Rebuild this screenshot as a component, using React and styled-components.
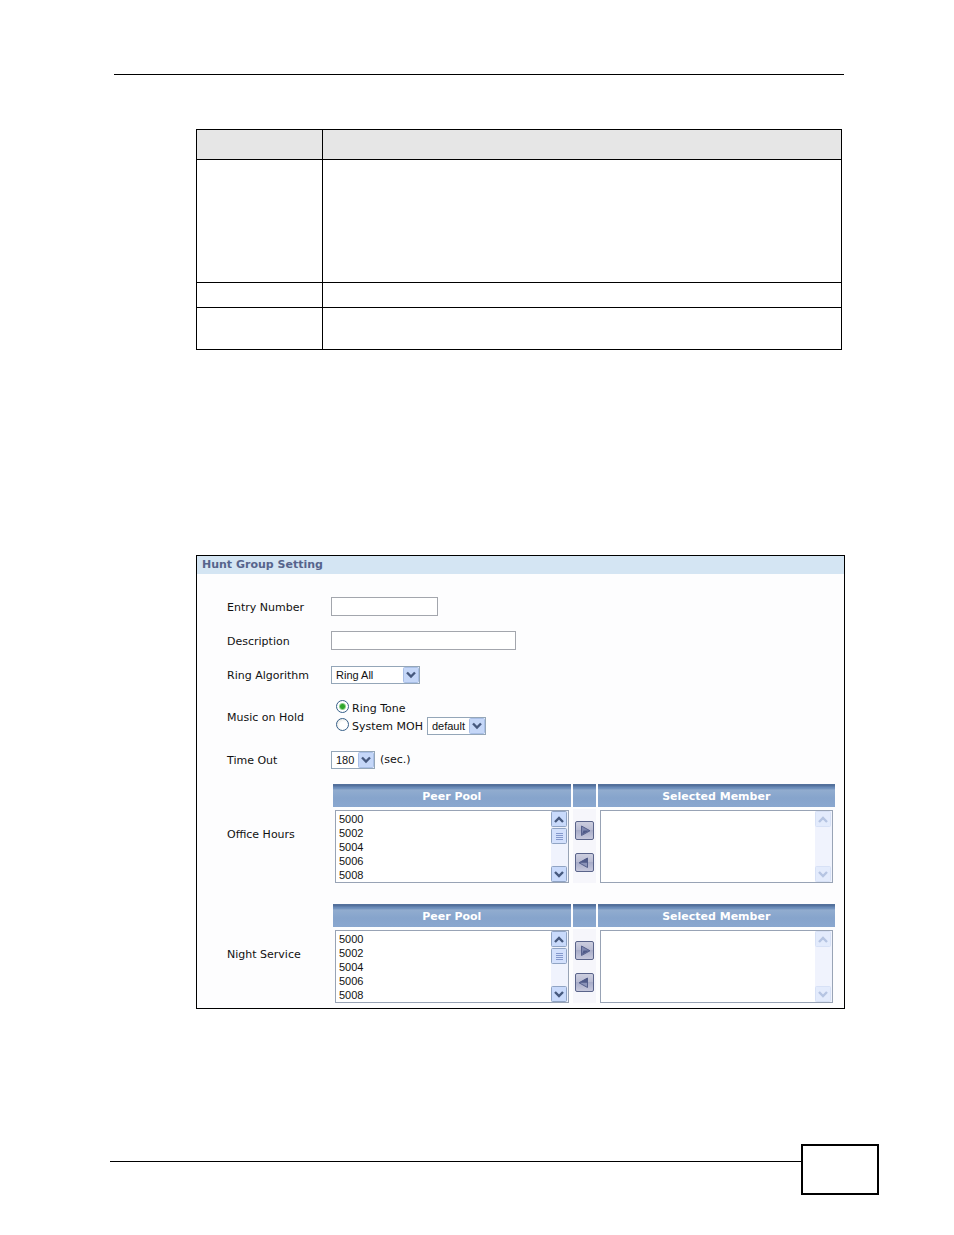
import React, { useState } from 'react';
import styled, { createGlobalStyle } from 'styled-components';

const GlobalStyle = createGlobalStyle`
    * { box-sizing: border-box; }
    body {
        margin: 0;
        background: #fff;
        color: #111;
        font-family: "DejaVu Sans", Verdana, sans-serif;
        font-size: 11px;
    }
`;

const Page = styled.div`
    padding: 74px 75px 40px 110px;
`;

const Rule = styled.hr`
    margin: 0 35px 0 4px;
    border: 0;
    border-top: 1px solid #000;
`;

const Main = styled.main`
    margin: 54px 34px 0 86px;
`;

const Table = styled.table`
    width: calc(100% - 3px);
    table-layout: fixed;
    border-collapse: collapse;
    th, td {
        padding: 0;
        border: 1px solid #000;
    }
    th {
        background: #e6e6e6;
    }
    th:first-child {
        width: 126px;
    }
`;

const TableRow = styled.tr`
    height: ${props => props.$height}px;
`;

const Panel = styled.form`
    margin-top: 205px;
    border: 1px solid #000;
    background: #fdfdfe;
`;

const Title = styled.h2`
    margin: 0;
    padding: 0 5px;
    background: #d4e5f3;
    color: #56648c;
    font-size: 11px;
    line-height: 18px;
`;

const Fields = styled.div`
    display: flex;
    flex-direction: column;
    gap: 15px;
    padding: 23px 9px 5px 30px;
`;

const Row = styled.div`
    display: flex;
    align-items: center;
    min-height: 19px;
`;

const Label = styled.label`
    flex: none;
    width: 104px;
    padding-top: 2px;
    line-height: 16px;
`;

const Input = styled.input`
    width: ${props => props.$width}px;
    height: 19px;
    padding: 0 3px;
    border: 1px solid #a3a6ad;
    border-radius: 0;
    background: #fff;
    font: inherit;
`;

const SelectWrap = styled.span`
    position: relative;
    display: inline-flex;
    width: ${props => props.$width}px;
    svg {
        position: absolute;
        top: 1px;
        right: 1px;
        pointer-events: none;
    }
`;

const Select = styled.select`
    appearance: none;
    width: 100%;
    height: 18px;
    padding: 0 4px;
    border: 1px solid #94a6b8;
    border-radius: 0;
    background: #fff;
    color: #111;
    font-family: "Liberation Sans", Arial, sans-serif;
    font-size: 11px;
`;

const Unit = styled.span`
    margin-left: 5px;
`;

const Radios = styled.div`
    display: flex;
    flex-direction: column;
    padding-left: 5px;
`;

const RadioLine = styled.div`
    display: flex;
    align-items: center;
    height: 18px;
    gap: 4px;
`;

const RadioLabel = styled.label`
    display: flex;
    align-items: center;
    gap: 3px;
    padding-top: 1px;
`;

const Radio = styled.input`
    appearance: none;
    width: 13px;
    height: 13px;
    margin: 0 0 4px;
    border: 1px solid #365f88;
    border-radius: 50%;
    background: radial-gradient(circle at 60% 60%, #fff 40%, #dcdcd6);
    &:checked {
        background: radial-gradient(circle, #2fa52c 0 2px, #8fd28a 3px, #fff 4px);
    }
`;

const PoolRow = styled.div`
    display: flex;
    align-items: center;
    margin-bottom: ${props => props.$last ? 0 : 6}px;
`;

const Pool = styled.div`
    flex: 1;
    display: grid;
    grid-template-columns: 1fr 23px 1fr;
    column-gap: 2px;
    margin-left: 2px;
`;

const PoolHead = styled.div`
    height: 23px;
    padding-top: 2px;
    background: linear-gradient(#54719c 0 2px, #6a8bb9 3px 4px, #91accf 6px, #86a4cc 14px, #8aa7cf);
    color: #fff;
    font-weight: bold;
    line-height: 21px;
    text-align: center;
`;

const ListBox = styled.div`
    display: flex;
    height: 73px;
    margin: 3px 2px 0;
    border: 1px solid #98a3b5;
    background: #fff;
`;

const List = styled.select`
    flex: 1;
    min-width: 0;
    height: 71px;
    padding: 2px 0 0 1px;
    border: 0;
    outline: 0;
    background: none;
    color: #111;
    font-family: "Liberation Sans", Arial, sans-serif;
    font-size: 11px;
    scrollbar-width: none;
    &::-webkit-scrollbar {
        display: none;
    }
    option {
        height: 14px;
        min-height: 14px;
        padding: 0 2px;
        line-height: 14px;
    }
`;

const Moves = styled.div`
    display: flex;
    flex-direction: column;
    align-items: center;
    justify-content: center;
    gap: 13px;
    margin-top: 2px;
    background: #f6f6fb;
`;

const MoveButton = styled.button`
    display: block;
    width: 19px;
    height: 19px;
    padding: 0;
    border: 1px solid #5a648a;
    border-radius: 2px;
    background: linear-gradient(#cdcfdf, #b9bcd3 45%, #a9adc9 50%, #c6c8dc);
    svg {
        display: block;
    }
`;

const Footer = styled.footer`
    display: flex;
    margin-top: 135px;
`;

const FooterRule = styled.div`
    flex: 1;
    margin-top: 17px;
    border-top: 1px solid #000;
`;

const PageBox = styled.div`
    width: 78px;
    height: 51px;
    border: 2px solid #000;
`;

const peers = ['5000', '5002', '5004', '5006', '5008', '5010', '5012', '5014'];

function Arrow() {
    return (
        <svg width="16" height="16" viewBox="0 0 16 16" aria-hidden="true">
            <rect x="0.5" y="0.5" width="15" height="15" rx="1" fill="#c5d7f8" stroke="#a9bfe6" />
            <path d="M4 5.500l4 4 4-4" fill="none" stroke="#46597e" strokeWidth="2.400" />
        </svg>
    );
}

function DropDown({ width, options, ...rest }) {
    return (
        <SelectWrap $width={width}>
            <Select {...rest}>
                {options.map(option => <option key={option}>{option}</option>)}
            </Select>
            <Arrow />
        </SelectWrap>
    );
}

function ScrollBar({ disabled }) {
    const box = disabled ? '#e3ebfc' : '#c9dafb';
    const edge = disabled ? '#d7e1f6' : '#90a4c4';
    const mark = disabled ? '#b5c4e2' : '#46597e';

    return (
        <svg width="17" height="71" viewBox="0 0 17 71" aria-hidden="true">
            <rect width="17" height="71" fill="#f0f3fd" />
            <rect x="0.5" y="0.5" width="15" height="15" rx="1" fill={box} stroke={edge} />
            <path d="M4 11l4-4 4 4" fill="none" stroke={mark} strokeWidth="2.400" />
            {!disabled && (
                <g>
                    <rect x="0.5" y="17.500" width="15" height="15" rx="1" fill="#d3e0fc" stroke="#90a4c4" />
                    <path d="M5 22.500h7M5 24.500h7M5 26.500h7M5 28.500h7" stroke="#8498cc" />
                </g>
            )}
            <rect x="0.5" y="55.500" width="15" height="15" rx="1" fill={box} stroke={edge} />
            <path d="M4 61l4 4 4-4" fill="none" stroke={mark} strokeWidth="2.400" />
        </svg>
    );
}

function MemberPool({ id, label, last }) {
    return (
        <PoolRow $last={last}>
            <Label htmlFor={id}>{label}</Label>
            <Pool>
                <PoolHead>Peer Pool</PoolHead>
                <PoolHead />
                <PoolHead>Selected Member</PoolHead>
                <ListBox>
                    <List id={id} multiple size={5}>
                        {peers.map(peer => <option key={peer}>{peer}</option>)}
                    </List>
                    <ScrollBar />
                </ListBox>
                <Moves>
                    <MoveButton type="button" aria-label="Add">
                        <svg width="17" height="17" viewBox="0 0 17 17">
                            <path d="M5.500 4v9.500l8.500-4.750z" fill="#7f88b0" stroke="#56608c" />
                            <path d="M7.500 8.500h6L6 12.500z" fill="#4f5a88" />
                        </svg>
                    </MoveButton>
                    <MoveButton type="button" aria-label="Remove">
                        <svg width="17" height="17" viewBox="0 0 17 17">
                            <path d="M11.500 4v9.500L3 8.750z" fill="#8b93b8" stroke="#56608c" />
                            <path d="M3 8.750 11.500 4v4.750z" fill="#4f5a88" />
                        </svg>
                    </MoveButton>
                </Moves>
                <ListBox>
                    <List multiple size={5} aria-label={label} />
                    <ScrollBar disabled />
                </ListBox>
            </Pool>
        </PoolRow>
    );
}

function App() {
    const [music, setMusic] = useState('tone');

    return (
        <React.Fragment>
            <GlobalStyle />
            <Page>
                <Rule />
                <Main>
                    <Table>
                        <thead>
                            <TableRow $height={30}><th /><th /></TableRow>
                        </thead>
                        <tbody>
                            <TableRow $height={123}><td /><td /></TableRow>
                            <TableRow $height={25}><td /><td /></TableRow>
                            <TableRow $height={42}><td /><td /></TableRow>
                        </tbody>
                    </Table>

                    <Panel>
                        <Title>Hunt Group Setting</Title>
                        <Fields>
                            <Row>
                                <Label htmlFor="entry">Entry Number</Label>
                                <Input id="entry" type="text" $width={107} />
                            </Row>
                            <Row>
                                <Label htmlFor="description">Description</Label>
                                <Input id="description" type="text" $width={185} />
                            </Row>
                            <Row>
                                <Label htmlFor="ring">Ring Algorithm</Label>
                                <DropDown id="ring" width={89} options={['Ring All']} />
                            </Row>
                            <Row role="radiogroup" aria-labelledby="music">
                                <Label as="span" id="music">Music on Hold</Label>
                                <Radios>
                                    <RadioLine>
                                        <RadioLabel>
                                            <Radio
                                                type="radio"
                                                name="music"
                                                checked={music === 'tone'}
                                                onChange={() => setMusic('tone')}
                                            />
                                            Ring Tone
                                        </RadioLabel>
                                    </RadioLine>
                                    <RadioLine>
                                        <RadioLabel>
                                            <Radio
                                                type="radio"
                                                name="music"
                                                checked={music === 'moh'}
                                                onChange={() => setMusic('moh')}
                                            />
                                            System MOH
                                        </RadioLabel>
                                        <DropDown width={59} options={['default']} aria-label="System MOH" />
                                    </RadioLine>
                                </Radios>
                            </Row>
                            <Row>
                                <Label htmlFor="timeout">Time Out</Label>
                                <DropDown id="timeout" width={44} options={['180']} />
                                <Unit>(sec.)</Unit>
                            </Row>
                            <MemberPool id="office" label="Office Hours" />
                            <MemberPool id="night" label="Night Service" last />
                        </Fields>
                    </Panel>
                </Main>

                <Footer>
                    <FooterRule />
                    <PageBox />
                </Footer>
            </Page>
        </React.Fragment>
    );
}

export default App;
